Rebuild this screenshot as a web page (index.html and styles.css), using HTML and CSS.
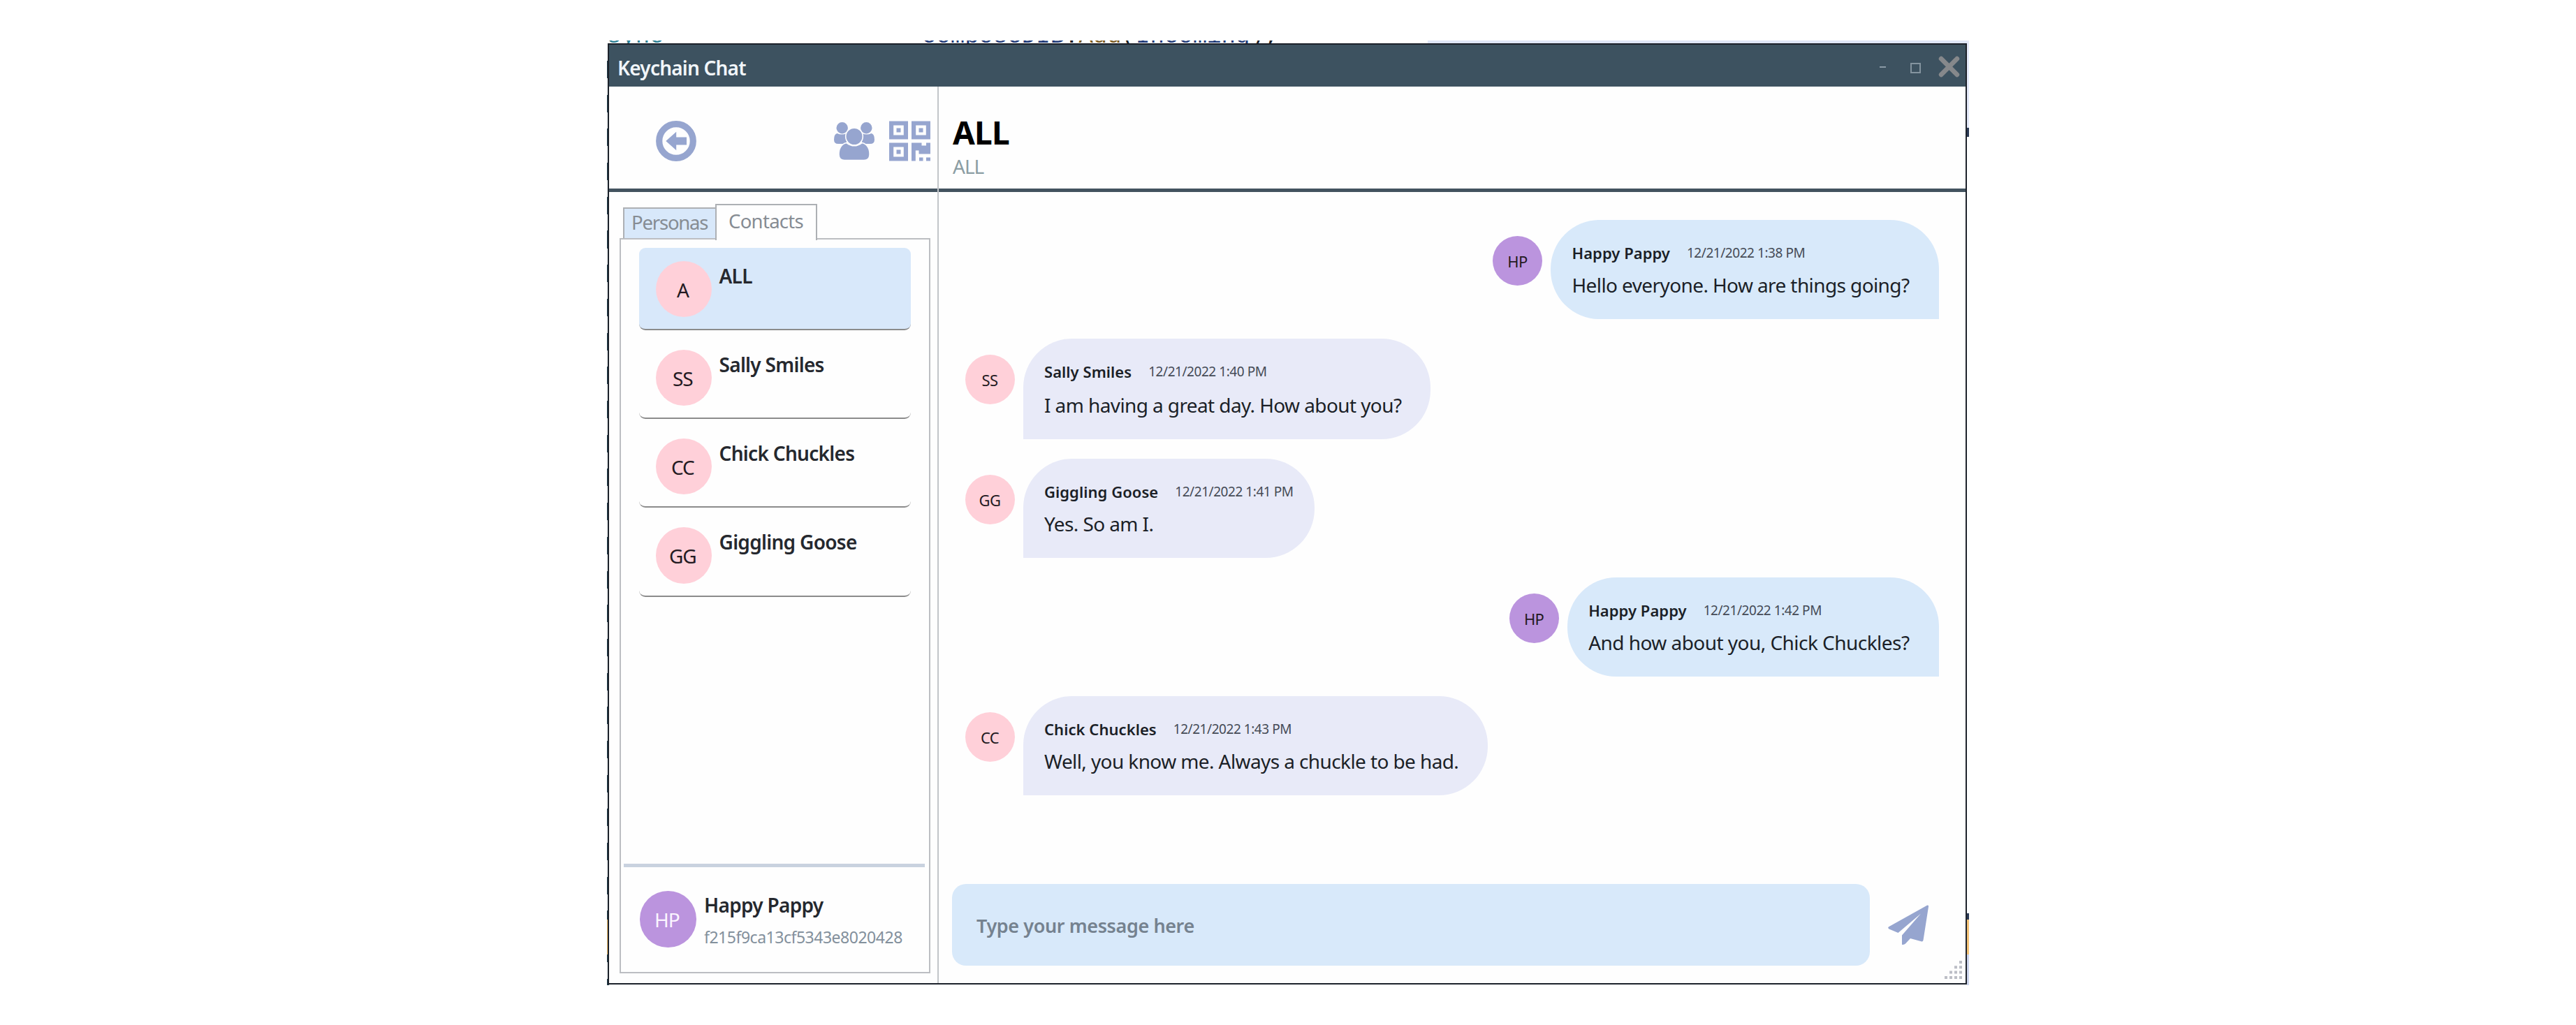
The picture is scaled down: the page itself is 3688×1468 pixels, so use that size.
FILE: index.html
```html
<!DOCTYPE html>
<html lang="en">
<head>
<meta charset="utf-8">
<title>Keychain Chat</title>
<link rel="stylesheet" href="styles.css">
</head>
<body>
<div class="desktop">
  <div class="code-line"><span class="kw">sync</span><span class="call"><b>composeDIB</b>.<i>Add</i>(<b>Incoming</b>);</span></div>
  <main class="window">
    <header class="titlebar">
      <span class="title">Keychain Chat</span>
      <div class="controls">
        <span class="minimize"></span>
        <span class="maximize"></span>
        <svg class="close" viewBox="0 0 32 30"><path d="M5 4L27 26M27 4L5 26"/></svg>
      </div>
    </header>
    <div class="columns">
      <aside class="sidebar">
        <div class="toolbar">
          <svg class="icon" viewBox="0 0 58 58"><circle cx="29" cy="29" r="24.3" fill="none" stroke="currentColor" stroke-width="9.2"/><path d="M14.3 29L29.2 15.8V23.5H44V34.5H29.2V42.2Z"/></svg>
          <div class="tools">
            <svg class="icon" viewBox="0 0 58 58"><circle cx="11.7" cy="10.3" r="8.2"/><circle cx="46.3" cy="10.3" r="8.2"/><path d="M4.500 18Q11 21 18 18V33H6Q0 33 0 27Q0 19 4.500 18ZM53.500 18Q47 21 40 18V33H52Q58 33 58 27Q58 19 53.500 18Z"/><path class="cut" d="M18 31.500Q29 40 40 31.500C48 33 51.500 41 51 49Q50.500 56.500 43 56.500H15Q7.500 56.500 7 49C6.500 41 10 33 18 31.500Z"/><circle class="cut" cx="29" cy="22.500" r="12.300"/></svg>
            <svg class="icon qr" viewBox="0 0 59 57"><path fill-rule="evenodd" d="M0 0H27V26H0ZM6.200 6V20H20.800V6ZM32 0H59V26H32ZM38.200 6V20H52.800V6ZM0 31H27V57H0ZM6.200 37V51H20.800V37ZM10.500 10H16.500V16H10.500ZM42.500 10H48.500V16H42.500ZM10.500 41H16.500V47H10.500ZM32 31H46.500V35H53V31H59V47H42.500V42H37.800V57H32ZM43 52H48.500V57H43ZM53 52H59V57H53Z"/></svg>
          </div>
        </div>
        <div class="tabs">
          <span class="tab">Personas</span>
          <span class="tab active">Contacts</span>
        </div>
        <div class="panel">
          <div class="contacts">
            <div class="contact selected"><span class="avatar">A</span><span class="name">ALL</span></div>
            <div class="contact"><span class="avatar">SS</span><span class="name">Sally Smiles</span></div>
            <div class="contact"><span class="avatar">CC</span><span class="name">Chick Chuckles</span></div>
            <div class="contact"><span class="avatar">GG</span><span class="name">Giggling Goose</span></div>
          </div>
          <div class="me">
            <span class="avatar own">HP</span>
            <div class="identity"><span class="name">Happy Pappy</span><span class="hash">f215f9ca13cf5343e8020428</span></div>
          </div>
        </div>
      </aside>
      <section class="chat">
        <div class="chat-head"><h1>ALL</h1><p>ALL</p></div>
        <div class="messages">
          <div class="message mine">
            <span class="avatar small own">HP</span>
            <div class="bubble"><div class="meta"><b>Happy Pappy</b><time>12/21/2022 1:38 PM</time></div><p>Hello everyone. How are things going?</p></div>
          </div>
          <div class="message tall">
            <span class="avatar small">SS</span>
            <div class="bubble"><div class="meta"><b>Sally Smiles</b><time>12/21/2022 1:40 PM</time></div><p>I am having a great day. How about you?</p></div>
          </div>
          <div class="message">
            <span class="avatar small">GG</span>
            <div class="bubble"><div class="meta"><b>Giggling Goose</b><time>12/21/2022 1:41 PM</time></div><p>Yes. So am I.</p></div>
          </div>
          <div class="message mine">
            <span class="avatar small own">HP</span>
            <div class="bubble"><div class="meta"><b>Happy Pappy</b><time>12/21/2022 1:42 PM</time></div><p class="loose">And how about you, Chick Chuckles?</p></div>
          </div>
          <div class="message">
            <span class="avatar small">CC</span>
            <div class="bubble"><div class="meta"><b>Chick Chuckles</b><time>12/21/2022 1:43 PM</time></div><p>Well, you know me. Always a chuckle to be had.</p></div>
          </div>
        </div>
        <div class="composer">
          <div class="field">Type your message here</div>
          <svg class="icon" viewBox="0 0 58 58"><path d="M55.800.800Q58.300 0 58 2.500L50.500 50.500Q50 53 47.500 52.300L32 48L25 55.500Q23 57.500 20 56.800V43.500L47 12.500L14.500 40L1.500 34.500Q-1 33 1.200 31.200Z"/></svg>
        </div>
      </section>
    </div>
    <svg class="grip" viewBox="0 0 27 27"><path d="M22 0h4v4h-4zM15 7.300h4v4h-4zM22 7.300h4v4h-4zM8 14.600h4v4h-4zM15 14.600h4v4h-4zM22 14.600h4v4h-4zM1 22h4v4h-4zM8 22h4v4h-4zM15 22h4v4h-4zM22 22h4v4h-4z"/></svg>
  </main>
</div>
</body>
</html>
```
FILE: styles.css
```css
* { box-sizing: border-box; }
body {
  margin: 0;
  background: #fff;
  font-family: "Noto Sans", "Open Sans", sans-serif;
  color: #1b1f27;
}
h1, p { margin: 0; font-weight: 400; }

/* Slice of the editor that shows round the window */
.desktop {
  width: 1950px;
  height: 1353px;
  margin: 58px 0 0 869px;
  padding: 4px 3px 2px 1px;
  position: relative;
  overflow: hidden;
  background:
    linear-gradient(transparent 1259px, #f0bd6c 1259px 1309px, transparent 1309px) 0 0 / 3px 100% no-repeat,
    repeating-linear-gradient(#1d3a48 0 25px, #e9eef0 25px 48.7px) 0 29px / 3px 100% no-repeat,
    linear-gradient(#e3e8f8 0 125px, #2b3a55 125px 138px, #fff 138px 1250px, #2b3a55 1250px 1259px, #f5c377 1259px 1309px, #ccd4ec 1309px) 100% 0 / 3px 100% no-repeat,
    linear-gradient(90deg, #fff 1175px, #dfe6f7 1175px) 0 0 / 100% 4px no-repeat,
    #fff;
}
.code-line {
  position: absolute;
  left: 0;
  top: -28px;
  width: 100%;
  height: 32px;
  overflow: hidden;
  display: flex;
  font: 34px/44px "Liberation Mono", monospace;
  white-space: pre;
}
.code-line .kw { width: 451px; color: #2b7f93; }
.code-line b { font-weight: 400; color: #1f3a78; }
.code-line i { font-style: normal; color: #7a5a20; }

.window {
  position: relative;
  height: 1348px;
  display: flex;
  flex-direction: column;
  border: 2.500px solid #1d222b;
  background: #fefefe;
}
.titlebar {
  height: 60px;
  flex: none;
  display: flex;
  justify-content: space-between;
  align-items: center;
  padding: 0 7px 0 12px;
  background: #3d5260;
}
.title {
  padding-top: 5px;
  font-size: 28px;
  font-weight: 600;
  letter-spacing: -.8px;
  color: #f1f6fa;
}
.controls { display: flex; align-items: center; }
.minimize { width: 9px; height: 2px; margin: 3px 35px 0 0; background: #8a9aa6; }
.maximize { width: 15px; height: 15px; margin: 7px 24px 0 0; border: 2px solid #84949f; }
.close { width: 33px; height: 31px; margin-top: 3px; fill: none; stroke: #86888b; stroke-width: 6.5; stroke-linecap: round; }

.columns { flex: 1; display: flex; min-height: 0; }
.sidebar { width: 472px; flex: none; display: flex; flex-direction: column; border-right: 2px solid #c2c5c9; }
.toolbar {
  height: 151px;
  flex: none;
  display: flex;
  justify-content: space-between;
  align-items: center;
  padding: 9px 10px 0 67px;
  border-bottom: 5px solid #43535f;
}
.tools { display: flex; gap: 21px; }
.icon { width: 58px; height: 58px; flex: none; fill: currentColor; color: #96a5cf; }
.icon.qr { width: 59px; }
.cut { stroke: #fefefe; stroke-width: 1.6; }

.tabs { height: 50px; flex: none; margin-top: 17px; padding-left: 20px; display: flex; align-items: flex-end; }
.tab {
  width: 132px;
  height: 45px;
  padding-left: 10px;
  border: 2px solid #adb0b4;
  border-width: 2px 0 0 2px;
  background: #d8e8fa;
  font-size: 27.500px;
  line-height: 40px;
  letter-spacing: -1.2px;
  color: #868c93;
}
.tab.active {
  position: relative;
  width: 146px;
  height: 52px;
  margin-bottom: -2px;
  padding-left: 17px;
  border-width: 2px 2px 0;
  background: #fefefe;
  line-height: 45px;
  letter-spacing: -.7px;
}
.panel {
  width: 445px;
  height: 1053px;
  margin: -1px 0 0 15px;
  display: flex;
  flex-direction: column;
  justify-content: space-between;
  border: 2px solid #bcbec2;
}
.contacts { display: flex; flex-direction: column; gap: 9.200px; padding: 12px 26px 0; }
.contact {
  height: 118px;
  display: flex;
  align-items: flex-start;
  gap: 10.500px;
  padding: 18.500px 0 0 23.500px;
  border-bottom: 2px solid #8b8b8b;
  border-radius: 9px;
}
.selected { background: #d8e8fa; }
.avatar {
  width: 80.500px;
  height: 80.500px;
  flex: none;
  display: flex;
  justify-content: center;
  align-items: center;
  padding: 2px 3px 0 0;
  border-radius: 50%;
  background: #ffd0d9;
  font-size: 28px;
  letter-spacing: -1.200px;
  color: #231a22;
}
.own { background: #bb94de; }
.me .avatar { color: #fbf5ff; }
.name { font-size: 28px; font-weight: 600; line-height: 36px; letter-spacing: -.7px; padding-top: 3px; white-space: nowrap; color: #25282e; }
.me {
  height: 155px;
  margin: 0 6px 0 4px;
  padding: 34px 0 0 23px;
  display: flex;
  align-items: flex-start;
  gap: 11.500px;
  border-top: 5px solid #c9d2df;
}
.identity { display: flex; flex-direction: column; gap: 10px; }
.identity .name { padding-top: 2px; }
.hash { font-size: 23px; line-height: 36px; letter-spacing: -.48px; color: #83909c; }

.chat { flex: 1; display: flex; flex-direction: column; min-width: 0; }
.chat-head { height: 151px; flex: none; padding: 37px 0 0 20px; border-bottom: 5px solid #43535f; }
.chat-head h1 { font-size: 46px; font-weight: 700; line-height: 56px; letter-spacing: -.8px; color: #000; }
.chat-head p { margin-top: 3px; font-size: 28px; line-height: 36px; letter-spacing: -1px; color: #8b9da3; }

.messages { flex: 1; display: flex; flex-direction: column; gap: 28px; padding: 40px 38.500px 0 37.500px; }
.message { display: flex; align-items: flex-start; gap: 12px; }
.message.mine { justify-content: flex-end; }
.small { width: 71px; height: 71px; margin-top: 23px; padding: 1px 0 0; font-size: 22px; letter-spacing: -.6px; }
.bubble {
  height: 142px;
  padding: 32px 30px 0 30.500px;
  border-radius: 70px 70px 70px 0;
  background: #e8eaf8;
}
.mine .bubble { border-radius: 70px 70px 0 70px; background: #d8e9fa; }
.tall .bubble { height: 144px; }
.meta { display: flex; gap: 24px; line-height: 30px; white-space: nowrap; }
.meta b { font-size: 22px; font-weight: 600; letter-spacing: .05px; }
.meta time { font-size: 19px; letter-spacing: -.45px; color: #454b56; }
.bubble p { margin: 13px 12px 0 0; font-size: 28px; line-height: 36px; letter-spacing: -.6px; white-space: nowrap; }
.bubble .loose { letter-spacing: -.54px; }
.tall .bubble p { margin-top: 15px; }

.composer { flex: none; display: flex; align-items: center; gap: 26px; padding: 0 53px 25px 19px; }
.field {
  flex: 1;
  height: 117px;
  padding: 3px 35px 0;
  border-radius: 20px;
  background: #d8e9fa;
  font-size: 27px;
  font-weight: 600;
  line-height: 113px;
  letter-spacing: -.4px;
  color: #75828f;
}
.grip { position: absolute; right: 4px; bottom: 5px; width: 27px; height: 27px; fill: #bcbec6; }
```
